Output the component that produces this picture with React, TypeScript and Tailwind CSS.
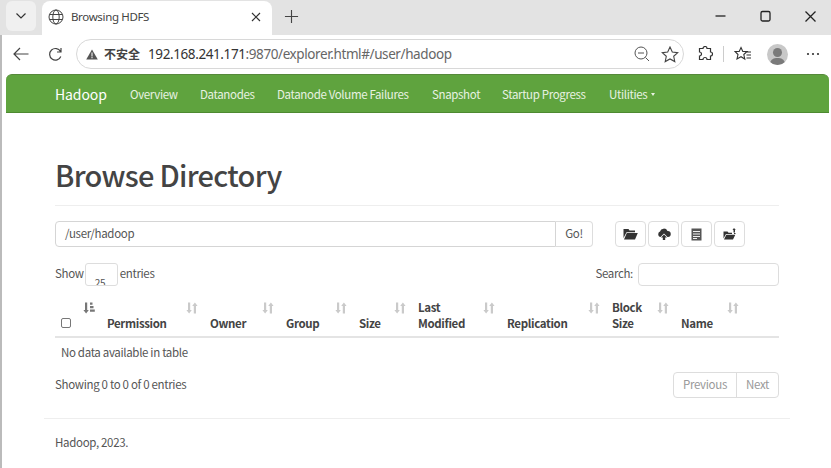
import React from "react";

const Sort = ({ dark }: { dark?: boolean }) => (
  <svg width="12" height="12" viewBox="0 0 12 12" className="absolute top-[7px] right-[6px]" fill={dark ? "#777" : "#cacaca"}>
    {dark ? (
      <>
        <path d="M2 0.500h2.200v7.500h1.600L3.100 11.500 0.400 8H2z" />
        <path d="M7 0.500h2.500v2.200H7zM7 4h3.500v2.200H7zM7 7.500h4.800v2.200H7z" />
      </>
    ) : (
      <>
        <path d="M2 0.500h2.200v7.500h1.600L3.100 11.500 0.400 8H2z" />
        <path d="M8.900 0.500l2.700 3.500H10v7.500H7.800V4H6.200z" />
      </>
    )}
  </svg>
);

const cols: { label: string[] }[] = [
  { label: ["Permission"] },
  { label: ["Owner"] },
  { label: ["Group"] },
  { label: ["Size"] },
  { label: ["Last", "Modified"] },
  { label: ["Replication"] },
  { label: ["Block", "Size"] },
  { label: ["Name"] },
];

const IconBtn = ({ children }: { children: React.ReactNode }) => (
  <div className="w-[31px] h-[26px] border border-[#ddd] rounded-[4px] bg-white flex items-center justify-center">
    {children}
  </div>
);

export default function App() {
  return (
    <div className="w-[831px] h-[468px] overflow-hidden bg-white relative text-[#555] font-['Noto_Sans_CJK_SC','Noto_Sans',sans-serif]">
      {/* tab strip */}
      <div className="h-[35px] bg-[#e3e3e3] flex items-end pl-[6px] relative">
        <div className="w-[30px] h-[30px] mb-[4px] bg-[#f0f0f0] rounded-[6px] flex items-center justify-center">
          <svg width="12" height="8" viewBox="0 0 12 8" fill="none" stroke="#333" strokeWidth="1.200"><path d="M1.500 1.500 6 6l4.500-4.500" /></svg>
        </div>
        <div className="ml-[6px] w-[230px] h-[34px] bg-white rounded-t-[8px] flex items-center pl-[6px] pr-[11px] pb-[3px]">
          <svg width="16" height="16" viewBox="0 0 16 16" fill="none" stroke="#444" strokeWidth="1">
            <circle cx="8" cy="8" r="7" />
            <ellipse cx="8" cy="8" rx="3.200" ry="7" />
            <path d="M1.500 5.500h13M1.500 10.500h13" />
          </svg>
          <span className="ml-[7px] text-[11.500px] text-[#444] font-['Noto_Sans',sans-serif] tracking-[-0.35px] flex-1 whitespace-nowrap">Browsing HDFS</span>
          <svg width="10" height="10" viewBox="0 0 10 10" stroke="#333" strokeWidth="1.200"><path d="M1 1l8 8M9 1l-8 8" /></svg>
        </div>
        <svg className="ml-[12px] mb-[11px]" width="15" height="15" viewBox="0 0 16 16" stroke="#444" strokeWidth="1.200"><path d="M8 1v14M1 8h14" /></svg>
        <div className="ml-auto mr-[-2px] flex items-center h-[35px] pb-[3px]">
          <svg width="45" height="32" viewBox="0 0 45 32" stroke="#222" strokeWidth="1.300"><path d="M17.500 16h10" /></svg>
          <svg width="45" height="32" viewBox="0 0 45 32" fill="none" stroke="#222" strokeWidth="1.300"><rect x="18" y="11.500" width="9" height="9.500" rx="1.500" /></svg>
          <svg width="45" height="32" viewBox="0 0 45 32" stroke="#222" strokeWidth="1.300"><path d="M17.500 11.500l10 10M27.500 11.500l-10 10" /></svg>
        </div>
      </div>
      {/* toolbar */}
      <div className="h-[37px] flex items-center pl-[13px] pt-[1px] bg-white">
        <svg width="16" height="14" viewBox="0 0 16 14" fill="none" stroke="#444" strokeWidth="1.200"><path d="M15.500 7H1M7 1 1 7l6 6" /></svg>
        <svg className="ml-[19px]" width="15" height="15" viewBox="0 0 15 15" fill="none" stroke="#444" strokeWidth="1.200"><path d="M12.800 9.500a5.800 5.800 0 1 1-.3-5M13 1v4H9" /></svg>
        <div className="ml-[13px] w-[608px] h-[30px] rounded-full border border-[#d8d8d8] flex items-center pl-[9px] pr-[4px]">
          <svg width="12" height="11" viewBox="0 0 12 11"><path d="M6 0.500 11.800 10.500H0.200z" fill="#555" /><path d="M5.500 3.500h1v4h-1zM5.500 8h1v1.200h-1z" fill="#fff" /></svg>
          <span className="ml-[6px] text-[12px] font-bold text-[#444]">不安全</span>
          <span className="ml-[8px] text-[13.500px] text-[#333] font-['Noto_Sans',sans-serif] tracking-[-0.4px] whitespace-nowrap">192.168.241.171<span className="text-[#666]">:9870/explorer.html#/user/hadoop</span></span>
          <svg className="ml-auto" width="16" height="16" viewBox="0 0 16 16" fill="none" stroke="#555" strokeWidth="1"><circle cx="7" cy="7" r="6" /><path d="M4 7h6M11.500 11.500 15 15" /></svg>
          <svg className="ml-[11px]" width="18" height="17" viewBox="0 0 18 17" fill="none" stroke="#444" strokeWidth="1.100"><path d="M9 1l2.300 5 5.400.6-4 3.700 1.100 5.300L9 13l-4.800 2.600 1.100-5.300-4-3.700L6.700 6z" /></svg>
        </div>
        <svg className="ml-[13px]" width="16" height="16" viewBox="0 0 16 16" fill="none" stroke="#333" strokeWidth="1.200"><path d="M6 2.500a2 2 0 0 1 4 0h3.500V6a2 2 0 0 1 0 4v3.500H10a2 2 0 0 0-4 0H2.500V10a2 2 0 0 0 0-4V2.500z" /></svg>
        <div className="ml-[10px] w-px h-[16px] bg-[#ccc]" />
        <svg className="ml-[10px]" width="18" height="16" viewBox="0 0 18 16" fill="none" stroke="#333" strokeWidth="1.100"><path d="M7 1.500l1.800 4H13L9.800 8.500l1 4.500L7 10.700 3 13l1-4.500L1 5.500h4.200zM12 6h5M12.500 9h4.500M12.500 12h4.500" /></svg>
        <div className="ml-[15px] w-[21px] h-[21px] rounded-full bg-[#c8c8c8] relative overflow-hidden">
          <div className="absolute left-[6px] top-[4px] w-[9px] h-[9px] rounded-full bg-[#7a7a7a]" />
          <div className="absolute left-[3px] top-[14px] w-[15px] h-[12px] rounded-full bg-[#7a7a7a]" />
        </div>
        <svg className="ml-[18px]" width="14" height="4" viewBox="0 0 14 4" fill="#333"><circle cx="2" cy="2" r="1.100" /><circle cx="7" cy="2" r="1.100" /><circle cx="12" cy="2" r="1.100" /></svg>
      </div>
      {/* page */}
      <div className="pl-[6px] pr-[2px]">
        <nav className="mt-[2px] h-[39px] bg-[#5fa33e] border-b border-t border-b-[#4d8a30] border-t-[#56893b] rounded-t-[6px] flex items-center pl-[49px] pt-[2px] text-[#e8f2e2] text-[11.500px] tracking-[-0.35px] whitespace-nowrap">
          <span className="text-[14px] tracking-[-0.1px] text-white w-[75px]">Hadoop</span>
          <span className="w-[70px]">Overview</span>
          <span className="w-[77px]">Datanodes</span>
          <span className="w-[155px]">Datanode Volume Failures</span>
          <span className="w-[70px]">Snapshot</span>
          <span className="w-[107px]">Startup Progress</span>
          <span className="flex items-center">Utilities<span className="ml-[4px] border-x-[2.500px] border-x-transparent border-t-[3px] border-t-[#e8f2e2]" /></span>
        </nav>
        <main className="pl-[49px] pr-[50px]">
          <h1 className="mt-[41px] text-[29px] leading-[40px] text-[#444] font-medium pb-[11px] border-b border-[#eee] tracking-[-0.7px]">Browse Directory</h1>
          <div className="mt-[15px] flex items-center text-[11.500px] tracking-[-0.33px]">
            <div className="w-[501px] h-[26px] border border-[#d5d5d5] rounded-l-[4px] flex items-center pl-[9px]">/user/hadoop</div>
            <div className="w-[37px] h-[26px] border border-l-0 border-[#ddd] rounded-r-[4px] flex items-center justify-center">Go!</div>
            <div className="ml-[22px] flex gap-[2px]">
              <IconBtn>
                <svg width="15" height="12" viewBox="0 0 15 12" fill="#333"><path d="M0.500 1h5l1 1.500H12v1.700H3.500L0.500 10zM3.800 5h11l-2.800 6.500H1z" /></svg>
              </IconBtn>
              <IconBtn>
                <svg width="14" height="12" viewBox="0 0 14 12" fill="#333"><path d="M3.500 9H3a3 3 0 0 1 0-5.500 4 4 0 0 1 7.500-.5 3 3 0 0 1 .5 6h-.5L7 5.500z" /><path d="M7 6.500 10 9.500H8.200V12H5.800V9.500H4z" /></svg>
              </IconBtn>
              <IconBtn>
                <svg width="11" height="13" viewBox="0 0 11 13"><rect x="0.500" y="0.500" width="10" height="12" fill="#555" /><path d="M2 3h7v1H2zM2 5.500h7v1H2zM2 8h7v1H2zM2 10h4v1H2z" fill="#eee" /></svg>
              </IconBtn>
              <IconBtn>
                <svg width="14" height="12" viewBox="0 0 14 12" fill="#333"><path d="M0.500 3.500h4l1 1.200H9v1.300H3L0.500 10.500zM3.300 6.700h9l-2.300 4.800H1z" /><path d="M11 0l1.800 2H12v2.500h-1.500V2h-1zM11 5h1.500v1H11z" /></svg>
              </IconBtn>
            </div>
          </div>
          <div className="mt-[15px] h-[24px] flex items-center justify-between text-[11.500px] tracking-[-0.33px]">
            <div className="flex items-center">
              <span>Show</span>
              <div className="ml-[1px] w-[33px] h-[23px] border border-[#ddd] rounded-[3px] overflow-hidden text-[10px] leading-[12px] pl-[9px] pt-[13px] mt-[1px]">25</div>
              <span className="ml-[2px]">entries</span>
            </div>
            <div className="flex items-center">
              <span>Search:</span>
              <div className="ml-[5px] w-[141px] h-[23px] border border-[#ddd] rounded-[4px] mt-[1px]" />
            </div>
          </div>
          <div className="mt-[9px] grid grid-cols-[46px_103px_76px_73px_59px_89px_105px_69px_70px_1fr] h-[43px] border-b-2 border-[#e4e4e4] font-bold text-[11.500px] leading-[15.500px] tracking-[-0.35px] text-[#444]">
            <div className="relative flex items-end pl-[6px] pb-[8px]">
              <div className="w-[10px] h-[10px] border border-[#777] rounded-[2px] bg-white" />
              <Sort dark />
            </div>
            {cols.map((c) => (
              <div key={c.label.join()} className="relative flex flex-col justify-end pl-[6px] pb-[5px]">
                {c.label.map((l) => <span key={l}>{l}</span>)}
                <Sort />
              </div>
            ))}
            <div />
          </div>
          <div className="h-[30px] flex items-center pl-[6px] text-[11.500px] tracking-[-0.33px]">No data available in table</div>
          <div className="mt-[4px] flex items-center justify-between text-[11.500px] tracking-[-0.33px]">
            <span className="mt-[-1px]">Showing 0 to 0 of 0 entries</span>
            <div className="flex h-[26px] border border-[#ddd] rounded-[4px] text-[#999] items-center">
              <span className="w-[62px] text-center">Previous</span>
              <span className="w-[42px] h-full border-l border-[#ddd] flex items-center justify-center">Next</span>
            </div>
          </div>
        </main>
        <div className="mt-[20px] ml-[38px] mr-[39px] border-t border-[#eee]" />
        <div className="mt-[15px] pl-[49px] text-[11.500px] tracking-[-0.33px]">Hadoop, 2023.</div>
      </div>
      <div className="absolute left-0 top-[35px] bottom-0 w-[2px] bg-[#bbb]" />
    </div>
  );
}
